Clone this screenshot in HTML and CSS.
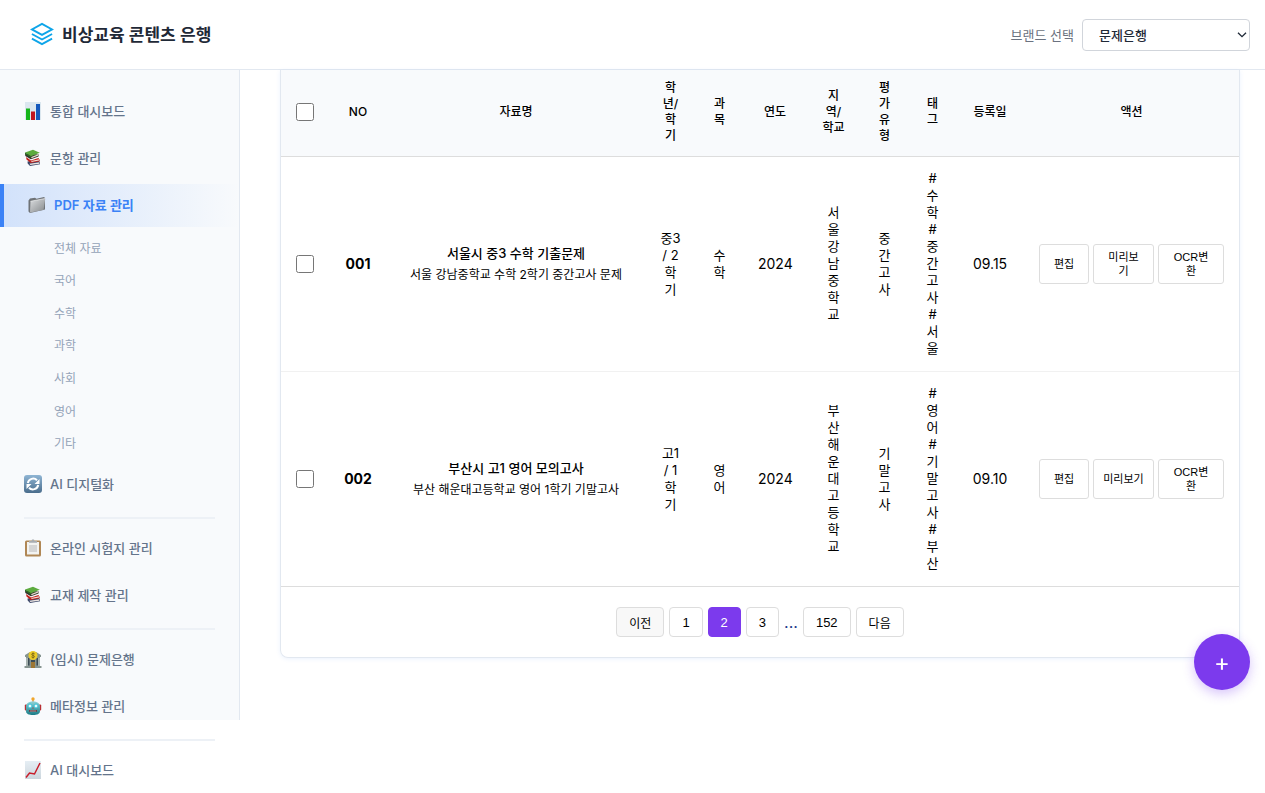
FILE: index.html
```html
<!DOCTYPE html>
<html lang="ko">
<head>
<meta charset="utf-8">
<title>비상교육 콘텐츠 은행</title>
<link rel="stylesheet" href="styles.css">
</head>
<body>
<svg class="defs" width="0" height="0" aria-hidden="true">
  <defs>
    <linearGradient id="folderFill" x1="0" y1="0" x2="1" y2="1"><stop offset="0" stop-color="#dcdee0"/><stop offset="1" stop-color="#84888b"/></linearGradient>
    <linearGradient id="syncFill" x1="0" y1="0" x2="0" y2="1"><stop offset="0" stop-color="#8fb5d4"/><stop offset="1" stop-color="#4a6d8c"/></linearGradient>
    <linearGradient id="botFill" x1="0" y1="0" x2="0" y2="1"><stop offset="0" stop-color="#8fd3d8"/><stop offset="1" stop-color="#167a86"/></linearGradient>
    <linearGradient id="paperFill" x1="0" y1="0" x2="0" y2="1"><stop offset="0" stop-color="#e6eef4"/><stop offset="1" stop-color="#ccd6dd"/></linearGradient>
    <symbol id="books" viewBox="0 0 18 18">
      <path d="M3.500 12.500L13 11l3 2v2.300L6 17l-2.300-2.500z" fill="#3a4668"/>
      <path d="M5.500 14.800L15.500 13.300v1.400L6.300 16z" fill="#ece4e0"/>
      <path d="M2 8l5 3.500L14.500 9l1.200 2v1.300L6.800 14 2.500 10.500z" fill="#c3201c"/>
      <path d="M7.300 12l7.700-1.700.2 1.200-7.700 1.500z" fill="#f0dcd2"/>
      <path d="M1 4.500L1.300 7l5.500 3.300 7.700-2.800.3-2z" fill="#33302c"/>
      <path d="M7.200 8l7-2.700.3 1.300L7.500 9.300z" fill="#e4dfcb"/>
      <path d="M1 3.500L9 .8l6.800 3L7 7.300z" fill="#5cab3e"/>
      <path d="M1 3.500l6 3.800v1.500L1 5z" fill="#2c6e24"/>
    </symbol>
  </defs>
</svg>

<header class="topbar">
  <div class="brand">
    <svg class="brand-logo" viewBox="0 0 24 24" fill="none" stroke="#0ea5e9" stroke-width="2" stroke-linejoin="miter" aria-hidden="true">
      <path d="M12 1L23 7 12 13 1 7z"/><path d="M1 12l11 6 11-6"/><path d="M1 17l11 6 11-6"/>
    </svg>
    <h1 class="brand-name">비상교육 콘텐츠 은행</h1>
  </div>
  <div class="brand-picker">
    <label for="brand">브랜드 선택</label>
    <div class="select-box">
      <select id="brand" class="brand-select"><option>문제은행</option></select>
      <svg class="chevron" viewBox="0 0 10 6" fill="none" stroke="#1f2937" stroke-width="1.300" aria-hidden="true"><path d="M1 .7l4 4 4-4"/></svg>
    </div>
  </div>
</header>

<div class="layout">
  <nav class="sidebar">
    <a class="nav-item" href="#"><svg class="nav-icon" viewBox="0 0 18 18"><path d="M1 0h16v18H1z" fill="#dbe7ef"/><path d="M2 6.500h4V18H2z" fill="#17b51b"/><path d="M7 9.500h4V18H7z" fill="#c01420"/><path d="M12 2h4v16h-4z" fill="#1458bd"/></svg>통합 대시보드</a>
    <a class="nav-item" href="#"><svg class="nav-icon"><use href="#books"/></svg>문항 관리</a>
    <a class="nav-item active" href="#"><svg class="nav-icon" viewBox="0 0 18 18"><path d="M.5 4.500L2 2.500l5-.8 1.500 1 7.500-1.700 1 1v11.500L2 17 .5 15.500z" fill="#6f7377"/><path d="M2.500 5.300L17.300 2.500 15.500 14 2 16.500z" fill="url(#folderFill)"/><path d="M2.500 5.300L17.300 2.500" stroke="#eceeef" stroke-width=".7"/></svg>PDF 자료 관리</a>
    <div class="subnav">
      <a href="#">전체 자료</a>
      <a href="#">국어</a>
      <a href="#">수학</a>
      <a href="#">과학</a>
      <a href="#">사회</a>
      <a href="#">영어</a>
      <a href="#">기타</a>
    </div>
    <a class="nav-item" href="#"><svg class="nav-icon" viewBox="0 0 18 18"><rect width="18" height="18" rx="3" fill="url(#syncFill)"/><path d="M3.800 8A5.400 5.400 0 0 1 13 5.300M14.200 10A5.400 5.400 0 0 1 5 12.700" fill="none" stroke="#fff" stroke-width="2"/><path d="M15.500 4v5h-5zM2.500 14V9h5z" fill="#fff"/></svg>AI 디지털화</a>
    <hr class="nav-rule">
    <a class="nav-item" href="#"><svg class="nav-icon" viewBox="0 0 18 18"><rect x="1" y="1.500" width="16" height="16" rx="1.500" fill="#b08755"/><path d="M3 3h12v12.500H3z" fill="#f3f3f1"/><path d="M5 6h8v7H5z" fill="#d5d5d5"/><path d="M5 3.800V2h2.500L8 .5h2L10.500 2H13v1.800z" fill="#a9adb1"/></svg>온라인 시험지 관리</a>
    <a class="nav-item" href="#"><svg class="nav-icon"><use href="#books"/></svg>교재 제작 관리</a>
    <hr class="nav-rule">
    <a class="nav-item" href="#"><svg class="nav-icon" viewBox="0 0 18 18"><path d="M1 5l5-3h6l5 3v2h-1v9h1.500v2H.5v-2H2V7H1z" fill="#879591"/><path d="M4 8h1.500v7.500H4zM7 10h4v6H7zM12.500 8H14v7.500h-1.500z" fill="#3b4b55"/><path d="M2.500 8h1v8h-1zM14.500 8h1v8h-1z" fill="#c8d0ce"/><path d="M7 12h4v6H7z" fill="#9c7634"/><circle cx="9" cy="5.500" r="4.500" fill="#eacb29"/><path d="M10.700 4c-.8-1-3-.9-3 .4 0 1.300 2.800.8 2.800 2.200 0 1.200-2.300 1.300-3.100.2M9 2.500v6" fill="none" stroke="#7c6514" stroke-width=".9"/></svg>(임시) 문제은행</a>
    <a class="nav-item" href="#"><svg class="nav-icon" viewBox="0 0 18 18"><path d="M8.500 2h1v4h-1z" fill="#a87543"/><circle cx="9" cy="2" r="1.700" fill="#f0a52b"/><rect x=".8" y="7.500" width="2.500" height="6" rx="1" fill="#b72f34"/><rect x="14.700" y="7.500" width="2.500" height="6" rx="1" fill="#b72f34"/><path d="M2 10c0-4 3-5.500 7-5.500S16 6 16 10v4c0 3-3 4-7 4s-7-1-7-4z" fill="url(#botFill)"/><circle cx="6" cy="9" r="2" fill="#e4fbff" stroke="#34c0d5"/><circle cx="12" cy="9" r="2" fill="#e4fbff" stroke="#34c0d5"/><path d="M8.300 11.500L9 10l.7 1.500z" fill="#c62828"/><path d="M5 13h8v1.800H5z" fill="#713b42"/><path d="M7 13v2M9 13v2M11 13v2" stroke="#d9e6e6" stroke-width=".5"/></svg>메타정보 관리</a>
    <hr class="nav-rule">
    <a class="nav-item" href="#"><svg class="nav-icon" viewBox="0 0 18 18"><path d="M1 0h16v18H1z" fill="url(#paperFill)"/><path d="M2 16.500l3.500-4.500 5 1 5.500-11" fill="none" stroke="#c81e2b" stroke-width="1.500"/></svg>AI 대시보드</a>
  </nav>

  <main class="content">
    <section class="card">
      <table class="grid">
        <colgroup><col class="c-check"><col class="c-no"><col><col class="c-grade"><col class="c-slim"><col class="c-year"><col class="c-region"><col class="c-type"><col class="c-slim"><col class="c-date"><col class="c-action"></colgroup>
        <thead>
          <tr>
            <th><input type="checkbox" aria-label="전체 선택"></th>
            <th>NO</th><th>자료명</th><th>학년/학기</th><th>과목</th><th>연도</th><th>지역/학교</th><th>평가유형</th><th>태그</th><th class="date">등록일</th><th>액션</th>
          </tr>
        </thead>
        <tbody>
          <tr>
            <td><input type="checkbox" aria-label="001 선택"></td>
            <td class="num"><strong>001</strong></td>
            <td class="name"><div class="doc-title">서울시 중3 수학 기출문제</div><div class="doc-desc">서울 강남중학교 수학 2학기 중간고사 문제</div></td>
            <td>중3 / 2학기</td><td>수학</td><td class="num">2024</td><td>서울강남중학교</td><td>중간고사</td><td>#수학 #중간고사 #서울</td><td class="num date">09.15</td>
            <td><div class="actions"><button type="button">편집</button><button type="button">미리보<br>기</button><button type="button">OCR변<br>환</button></div></td>
          </tr>
          <tr>
            <td><input type="checkbox" aria-label="002 선택"></td>
            <td class="num"><strong>002</strong></td>
            <td class="name"><div class="doc-title">부산시 고1 영어 모의고사</div><div class="doc-desc">부산 해운대고등학교 영어 1학기 기말고사</div></td>
            <td>고1 / 1학기</td><td>영어</td><td class="num">2024</td><td>부산해운대고등학교</td><td>기말고사</td><td>#영어 #기말고사 #부산</td><td class="num date">09.10</td>
            <td><div class="actions"><button type="button">편집</button><button type="button">미리보기</button><button type="button">OCR변<br>환</button></div></td>
          </tr>
        </tbody>
      </table>
      <div class="pager">
        <button type="button" class="step prev">이전</button>
        <button type="button">1</button>
        <button type="button" class="current">2</button>
        <button type="button">3</button>
        <span class="dots">...</span>
        <button type="button">152</button>
        <button type="button" class="step">다음</button>
      </div>
    </section>
  </main>
</div>
<button type="button" class="fab" aria-label="추가">+</button>
</body>
</html>
```
FILE: styles.css
```css
* { box-sizing: border-box; }

body {
  margin: 0;
  background: #fff;
  color: #000;
  font-family: Inter, "Noto Sans CJK KR", sans-serif;
  font-size: 13px;
}

button, select, input { font-family: inherit; }

.defs { position: absolute; }

.topbar {
  display: flex;
  align-items: center;
  justify-content: space-between;
  height: 70px;
  padding: 0 15px 0 31px;
  border-bottom: 1px solid #e2e8f0;
  background: #fff;
}

.brand { display: flex; align-items: center; gap: 9px; padding-bottom: 2px; }
.brand-logo { width: 22px; height: 22px; overflow: visible; }
.brand-name { margin: 0; font-size: 17px; font-weight: 600; color: #1f2937; }

.brand-picker { display: flex; align-items: center; gap: 8px; color: #6b7280; }
.select-box { position: relative; }
.brand-select {
  display: block;
  width: 168px;
  height: 32px;
  padding: 0 16px;
  border: 1px solid #d1d5db;
  border-radius: 4px;
  background: #fff;
  color: #1f2937;
  font-size: 13px;
  font-weight: 500;
  appearance: none;
}
.chevron {
  position: absolute;
  top: 13px;
  right: 3px;
  width: 10px;
  height: 6px;
  pointer-events: none;
}

.layout { display: flex; align-items: flex-start; }

/* The panel colour and its edge end at 650px; the links run on below it. */
.sidebar {
  flex: 0 0 240px;
  padding: 20px 1px 0 0;
  background:
    linear-gradient(#e2e8f0, #e2e8f0) right top / 1px 650px no-repeat,
    linear-gradient(#f8fafc, #f8fafc) left top / 100% 650px no-repeat;
}

.nav-item {
  display: flex;
  align-items: center;
  gap: 8px;
  height: 43px;
  margin-bottom: 4px;
  padding: 0 24px 2px;
  color: #64748b;
  font-weight: 500;
  text-decoration: none;
}
.nav-item:last-child { margin-bottom: 0; }
.nav-item.active {
  border-left: 4px solid #3b82f6;
  background: linear-gradient(90deg, rgba(59, 130, 246, 0.2), rgba(59, 130, 246, 0));
  color: #3b82f6;
  font-weight: 600;
}
.nav-icon { flex: none; width: 18px; height: 18px; }

.subnav {
  display: grid;
  grid-auto-rows: 1fr;
  height: 228px;
  margin-bottom: 4px;
  padding-left: 54px;
}
.subnav a {
  display: flex;
  align-items: center;
  color: #94a3b8;
  font-size: 12px;
  text-decoration: none;
}

.nav-rule {
  height: 2px;
  margin: 11px 24px 8px;
  border: 0;
  background: #edf1f6;
}

.content { flex: 1; min-width: 0; padding: 0 25px 0 40px; }

.card {
  border: 1px solid #e2e8f0;
  border-top: 0;
  border-radius: 0 0 8px 8px;
  box-shadow: 0 1px 4px rgba(59, 130, 246, 0.1);
}

.grid { width: 100%; table-layout: fixed; border-collapse: collapse; }
.grid th, .grid td { padding: 13px 15px 14px; text-align: center; vertical-align: middle; }
.grid th {
  padding: 10px 15px 12px;
  border-bottom: 1px solid #ddd;
  background: #f8fafc;
  font-size: 12px;
  font-weight: 500;
  line-height: 16px;
}
.grid td { border-bottom: 1px solid #f1f1f1; line-height: 17px; }
.grid tbody tr:last-child td { border-bottom: 1px solid #ddd; }
.grid .num { font-size: 14px; }
.grid .name, .grid .date { padding-left: 8px; padding-right: 8px; }
.grid input { display: block; width: 18px; height: 18px; margin: 0 auto; }

.c-check { width: 48px; }
.c-no { width: 58px; }
.c-grade { width: 51px; }
.c-slim { width: 47px; }
.c-year { width: 64px; }
.c-region { width: 53px; }
.c-type { width: 49px; }
.c-date { width: 68px; }
.c-action { width: 215px; }

.doc-title { font-weight: 500; line-height: 20px; }
.doc-desc { margin-top: 3px; font-size: 12px; line-height: 18px; }

.actions { display: grid; grid-template-columns: 50fr 61fr 66fr; gap: 4px; }
.actions button {
  height: 40px;
  padding: 0;
  border: 1px solid #ddd;
  border-radius: 3px;
  background: #fff;
  color: #000;
  font-family: "Liberation Sans", "Noto Sans CJK KR", sans-serif;
  font-size: 11px;
  line-height: 14px;
}

.pager {
  display: flex;
  justify-content: center;
  gap: 5px;
  padding: 20px;
}
.pager button {
  height: 30px;
  padding: 0 12px;
  border: 1px solid #ddd;
  border-radius: 4px;
  background: #fff;
  color: #000;
  font-family: "Liberation Sans", "Noto Sans CJK KR", sans-serif;
  font-size: 13px;
}
.pager .step { font-size: 12px; }
.pager .prev { background: #f8f8f8; }
.pager .current { border-color: #7c3aed; background: #7c3aed; color: #fff; }
.dots { color: #1e3a8a; font-size: 16px; line-height: 30px; }

.fab {
  position: fixed;
  right: 15px;
  bottom: 103px;
  width: 56px;
  height: 56px;
  padding: 0;
  border: 0;
  border-radius: 50%;
  background: #7c3aed;
  box-shadow: 0 4px 12px rgba(124, 58, 237, 0.3);
  color: #fff;
  font-size: 24px;
}
```
